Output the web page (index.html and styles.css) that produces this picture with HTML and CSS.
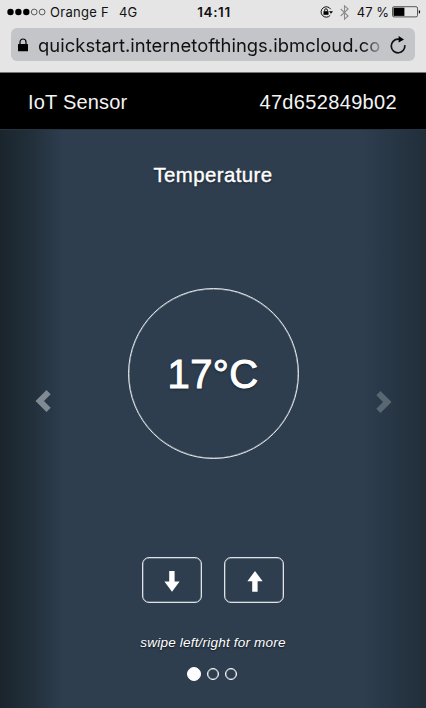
FILE: index.html
```html
<!DOCTYPE html>
<html lang="en">
<head>
<meta charset="utf-8">
<title>IoT Sensor</title>
<link rel="stylesheet" href="styles.css">
</head>
<body>
<div class="browser">
  <div class="status">
    <div class="status-left">
      <svg class="signal" width="39" height="8" viewBox="0 0 39 8"><g fill="#000"><circle cx="3.5" cy="4" r="3.2"/><circle cx="11.4" cy="4" r="3.2"/><circle cx="19.3" cy="4" r="3.2"/></g><g fill="none" stroke="#222" stroke-width=".7"><circle cx="27.2" cy="4" r="2.9"/><circle cx="35.1" cy="4" r="2.9"/></g></svg>
      <span class="carrier">Orange F</span>
      <span class="network">4G</span>
    </div>
    <span class="time">14:11</span>
    <div class="status-right">
      <svg class="rotation" width="13" height="12" viewBox="0 0 13 12"><path d="M10.7 3.2A5.2 5.2 0 1 0 10.2 9.4" fill="none" stroke="#111" stroke-width="1"/><path d="M9 5.2h4l-2 2.6z"/><path d="M3.5 5.2h5v3.6h-5z"/><path d="M4.6 5.4V4.2a1.4 1.4 0 0 1 2.8 0v1.2" fill="none" stroke="#111"/></svg>
      <svg class="bluetooth" width="9" height="15" viewBox="0 0 9 15"><path d="M.7 4l7.4 7-3.6 3.2V.8L8.1 4 .7 11" fill="none" stroke="#8b8b8d" stroke-width="1.1"/></svg>
      <span class="percent">47 %</span>
      <svg class="battery" width="29" height="12" viewBox="0 0 29 12"><rect x=".5" y=".7" width="25" height="10.2" rx="1.5" fill="none" stroke="#333" stroke-width=".8"/><path d="M1.5 1.7h10.9v8.2H1.5z"/><path d="M26.8 3.9q1.4.5 1.4 1.9t-1.4 1.9z"/></svg>
    </div>
  </div>
  <div class="address">
    <svg class="lock" width="10" height="14" viewBox="0 0 10 14"><rect y="6" width="10" height="7.3" rx=".6"/><path d="M2 6.5V4a3 3 0 0 1 6 0v2.5" fill="none" stroke="#000" stroke-width="1.2"/></svg>
    <span class="url">quickstart.internetofthings.ibmcloud.co</span>
    <svg class="reload" width="18" height="18" viewBox="0 0 18 18"><path d="M15.8 9.2A6.8 6.8 0 1 1 9 3.2H12" fill="none" stroke="#111" stroke-width="1.7"/><path d="M9.6 0L15 3.6 9.6 6.4z"/></svg>
  </div>
</div>
<header class="header">
  <span class="product">IoT Sensor</span>
  <span class="device">47d652849b02</span>
</header>
<main class="carousel">
  <div class="side prev"><svg width="16" height="22" viewBox="0 0 16 22"><path d="M11.5 0l4.2 4.2-6.7 6.8 6.7 6.8-4.2 4.2L.5 11z" fill="#7f8a92"/></svg></div>
  <section class="slide">
    <h1 class="title">Temperature</h1>
    <div class="gauge"><span class="reading">17°C</span></div>
    <div class="controls">
      <button class="step" aria-label="Decrease"><svg width="16" height="21" viewBox="0 0 16 21"><path d="M5.2 0h5.4v10.5h5L8 20.8.4 10.5h4.8z" fill="#fff"/></svg></button>
      <button class="step" aria-label="Increase"><svg width="16" height="21" viewBox="0 0 16 21"><path d="M5.2 20.8h5.4V10.3h5L8 0 .4 10.3h4.8z" fill="#fff"/></svg></button>
    </div>
    <p class="hint">swipe left/right for more</p>
    <div class="dots"><i class="dot active"></i><i class="dot"></i><i class="dot"></i></div>
  </section>
  <div class="side next"><svg width="16" height="22" viewBox="0 0 16 22"><path d="M4.5 0L.3 4.2 7 11 .3 17.8 4.5 22l11-11z" fill="#596773"/></svg></div>
</main>
</body>
</html>
```

FILE: styles.css
```css
* { box-sizing: border-box; }
body { margin: 0; width: 426px; height: 708px; overflow: hidden; background: #2e3e4f; font-family: "Liberation Sans", Arial, sans-serif; }
svg { display: block; flex: none; }
.browser { height: 73px; background: #e5e5e5; border-bottom: 1px solid #77777a; color: #111; font-family: Inter, sans-serif; }
.status { height: 28px; padding: 0 5px 4px 7px; display: grid; grid-template-columns: 1fr auto 1fr; align-items: center; font-size: 13px; line-height: 16px; white-space: nowrap; }
.status-left, .status-right { display: flex; align-items: center; }
.status-right { justify-content: flex-end; }
.carrier { margin-left: 4px; letter-spacing: .3px; }
.network { margin-left: 10px; }
.time { font-size: 13.5px; font-weight: 600; letter-spacing: .6px; }
.bluetooth { margin-left: 7px; }
.percent { margin-left: 8px; }
.battery { margin-left: 3px; }
.address { height: 33px; margin: 0 11px; padding: 0 8px 0 7px; display: flex; align-items: center; border-radius: 6px; background: #c4c5c9; }
.url { width: 343px; margin-left: 10px; overflow: hidden; white-space: nowrap; font-size: 18.4px; letter-spacing: .04px; line-height: 26px; background: linear-gradient(90deg, #111 325px, #999a9e 343px); background-clip: text; -webkit-background-clip: text; color: transparent; }
.reload { margin-left: auto; }
.header { height: 56px; padding: 2px 29px 0 28px; display: flex; align-items: center; justify-content: space-between; background: #000; color: #f4f4f4; font-size: 20px; }
.product { letter-spacing: .2px; }
.device { letter-spacing: .34px; }
.carousel { height: 579px; display: flex; border-top: 1px solid #263340; background: linear-gradient(90deg, #1a242c 0, #22303b 32px, #2e3e4f 64px, #2e3e4f 362px, #212e3a 426px); color: #fff; }
.side { width: 64px; padding-top: 260px; }
.prev { padding-left: 35px; }
.next { padding-left: 14px; padding-top: 261px; }
.slide { flex: 1; display: flex; flex-direction: column; align-items: center; }
.title { margin: 33px 0 0; height: 24px; line-height: 24px; font-size: 20.4px; letter-spacing: .42px; font-weight: 400; -webkit-text-stroke: .4px #fff; text-shadow: 0 1px 2px rgba(0,0,0,.6); }
.gauge { width: 171px; height: 171px; margin-top: 101px; border: 1px solid #e6e9eb; box-shadow: inset 0 0 0 .5px rgba(230,233,235,.6); border-radius: 50%; display: flex; align-items: center; justify-content: center; }
.reading { font-size: 40px; line-height: 46px; letter-spacing: .4px; -webkit-text-stroke: 1px #fff; text-shadow: 0 1px 3px rgba(0,0,0,.6); }
.controls { margin-top: 98px; display: flex; gap: 22px; }
.step { width: 60px; height: 46px; padding: 2px 1px 0 0; display: flex; align-items: center; justify-content: center; border: 1px solid #dfe3e6; box-shadow: inset 0 0 0 .5px rgba(223,227,230,.6); border-radius: 7px; background: transparent; }
.step + .step { padding: 2px 0 0 1px; }
.hint { margin: 31px 0 0; font-size: 13.5px; letter-spacing: .2px; line-height: 18px; font-style: italic; white-space: nowrap; text-shadow: 0 1px 2px rgba(0,0,0,.7); }
.dots { margin: 14px 2px 0 0; height: 16px; display: flex; align-items: center; gap: 6px; }
.dot { width: 12px; height: 12px; border: 1px solid #fff; box-shadow: inset 0 0 0 .5px rgba(255,255,255,.6); border-radius: 50%; }
.active { width: 14px; height: 14px; background: #fff; }
```
